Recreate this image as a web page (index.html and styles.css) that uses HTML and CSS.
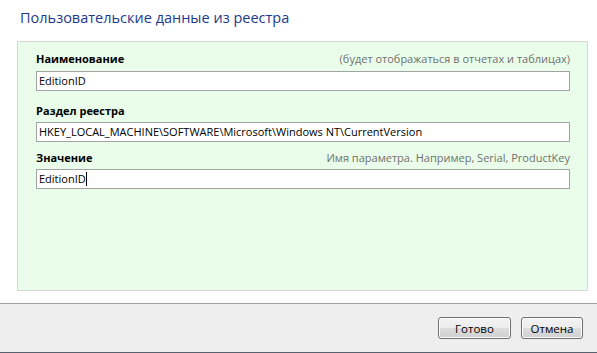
FILE: index.html
```html
<!DOCTYPE html>
<html lang="ru">
<head>
    <meta charset="UTF-8">
    <title>Пользовательские данные из реестра</title>
    <link rel="stylesheet" href="styles.css">
</head>
<body>
    <div class="dialog">
        <h1 class="title">Пользовательские данные из реестра</h1>
        <div class="panel">
            <div class="field field-first">
                <div class="field-head">
                    <span class="field-label">Наименование</span>
                    <span class="field-hint">(будет отображаться в отчетах и таблицах)</span>
                </div>
                <div class="textbox">EditionID</div>
            </div>
            <div class="field field-second">
                <div class="field-head">
                    <span class="field-label">Раздел реестра</span>
                </div>
                <div class="textbox">HKEY_LOCAL_MACHINE\SOFTWARE\Microsoft\Windows NT\CurrentVersion</div>
            </div>
            <div class="field field-third">
                <div class="field-head">
                    <span class="field-label">Значение</span>
                    <span class="field-hint">Имя параметра. Например, Serial, ProductKey</span>
                </div>
                <div class="textbox">EditionID<span class="caret"></span></div>
            </div>
        </div>
        <div class="footer">
            <button type="button" class="btn">Готово</button>
            <button type="button" class="btn">Отмена</button>
        </div>
    </div>
</body>
</html>
```

FILE: styles.css
```css
body {
    margin: 0;
    padding: 0;
    background: #fff;
    font-family: "Open Sans", "Noto Sans", sans-serif;
    font-size: 11px;
    color: #000;
}
.dialog {
    width: 597px;
    height: 353px;
    display: flex;
    flex-direction: column;
}
.title {
    margin: 0;
    height: 41px;
    box-sizing: border-box;
    padding: 7px 0 0 20px;
    font-size: 14.5px;
    font-weight: normal;
    line-height: 22px;
    color: #1c3a8c;
}
.panel {
    width: 571px;
    height: 250px;
    box-sizing: border-box;
    margin-left: 17px;
    padding: 9px 17px 0 18px;
    background: #eafdea;
    border: 1px solid #d6d6d6;
}
.field-head {
    display: flex;
    justify-content: space-between;
    align-items: baseline;
    height: 16px;
    line-height: 16px;
}
.field-label {
    font-weight: bold;
}
.field-hint {
    color: #707070;
    font-size: 11px;
}
.field-first .field-head {
    margin-bottom: 4px;
}
.field-second {
    margin-top: 12px;
}
.field-second .field-head {
    margin-bottom: 3px;
}
.field-third {
    margin-top: 8px;
}
.field-third .field-head {
    margin-bottom: 3px;
}
.textbox {
    height: 20px;
    box-sizing: border-box;
    padding: 0 2px;
    background: #fff;
    border: 1px solid #a3a3a3;
    line-height: 18px;
    white-space: nowrap;
    overflow: hidden;
}
.caret {
    display: inline-block;
    width: 0;
    height: 14px;
    border-left: 1px solid #000;
    vertical-align: -3px;
}
.footer {
    margin-top: 12px;
    flex: 1;
    display: flex;
    justify-content: flex-end;
    align-items: flex-start;
    gap: 10px;
    padding: 13px 14px 0 0;
    background: #eeeeee;
    border-top: 1px solid #a0a0a0;
    border-bottom: 1px solid #56616d;
}
.btn {
    width: 73px;
    height: 22px;
    padding: 0;
    font-family: inherit;
    font-size: 11.5px;
    color: #000;
    background: linear-gradient(#f3f3f3 0%, #ececec 50%, #dddddd 51%, #cfcfcf 100%);
    border: 1px solid #707070;
    border-radius: 3px;
    box-shadow: inset 0 0 0 1px #fcfcfc;
}
.btn:last-child {
    width: 62px;
}
```
